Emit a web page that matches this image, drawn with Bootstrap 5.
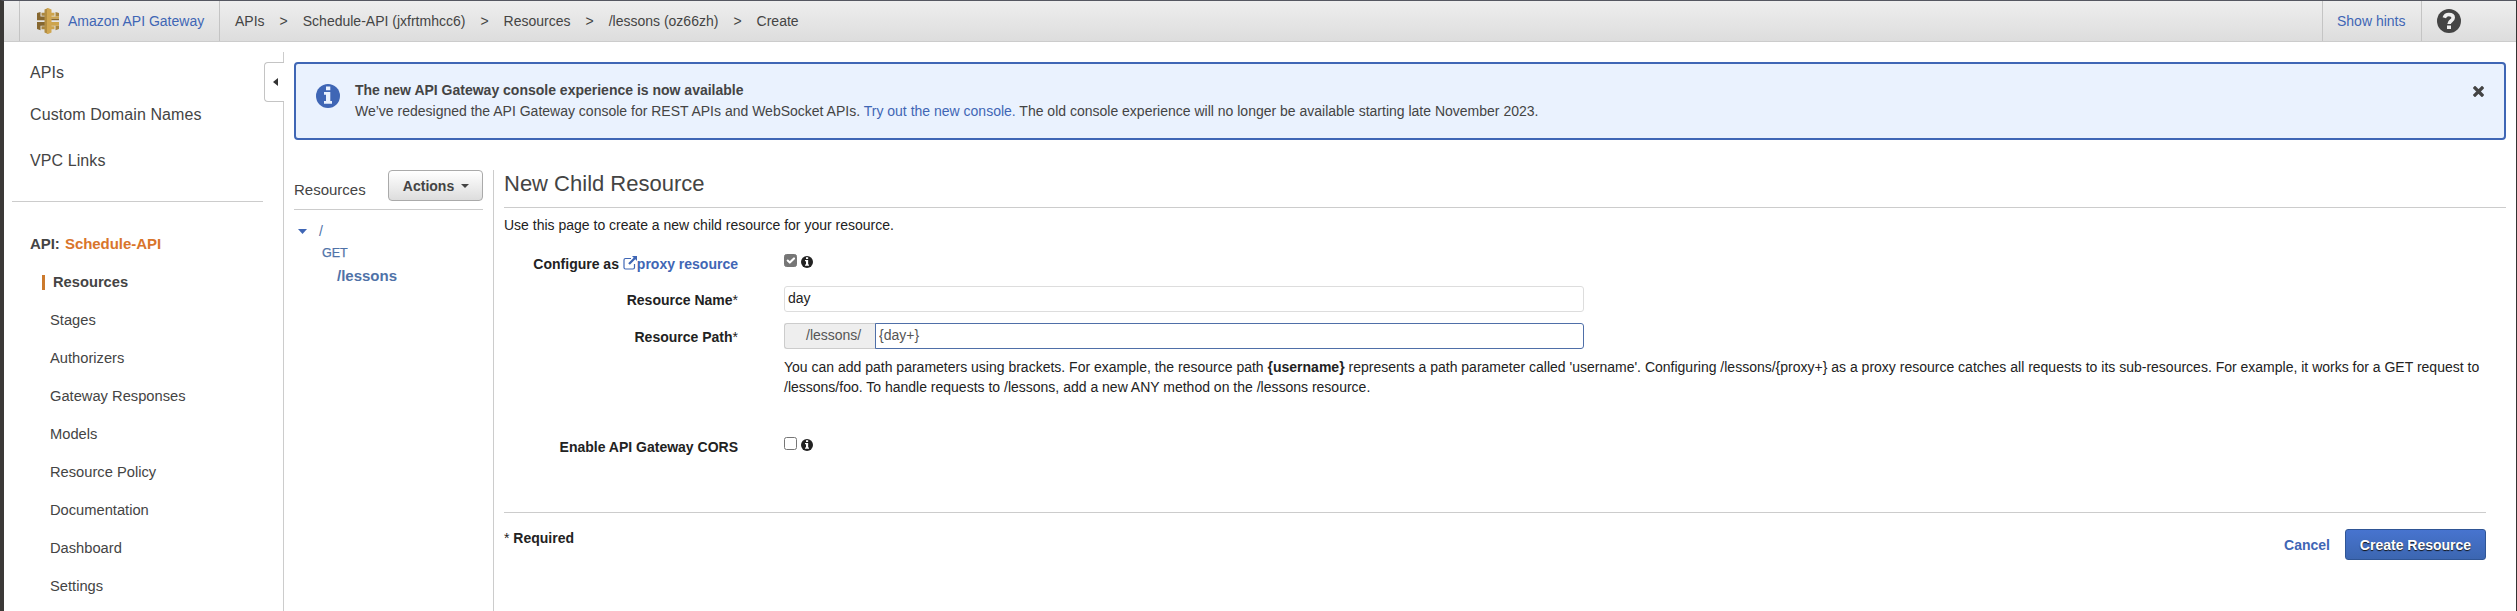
<!DOCTYPE html>
<html lang="en">
<head>
<meta charset="utf-8">
<title>API Gateway</title>
<link href="https://cdn.jsdelivr.net/npm/bootstrap@5.3.0/dist/css/bootstrap.min.css" rel="stylesheet">
<style>
body{font-family:"Liberation Sans",Arial,sans-serif;font-size:14px;line-height:20px;color:#222;background:#fff}
a{color:#3f66b5;text-decoration:none}
.shell{height:611px;border-left:4px solid #3b3937;border-right:1px solid #333;border-top:1px solid #555761;overflow:hidden}
.topbar{height:41px;background:linear-gradient(#eee,#ddd);border-bottom:1px solid #ccc;color:#444}
.svc{width:201px;margin-left:15px;border:solid #c4c4c4;border-width:0 1px;padding-left:17px;gap:9px}
.crumbs{padding-left:15px;gap:15px}
.hints{width:100px;border:solid #c4c4c4;border-width:0 1px;padding-left:14px}
.help{width:94px;padding-left:15px}
.sidebar{width:279px;flex:none;color:#444}
.sidebar .inner{width:251px;margin-left:8px}
.big a{display:block;color:#444;font-size:16px;line-height:20px;margin-left:18px;letter-spacing:.09px}
.big a:nth-child(1){padding-top:21px}
.big a:nth-child(2){padding-top:22px}
.big a:nth-child(3){padding-top:26px}
.side-line{border-top:1px solid #ccc;margin-top:30px}
.apiname{font-size:15px;font-weight:700;margin:32px 0 9px 18px;letter-spacing:-.05px}
.apiname span{color:#d9752b;margin-left:1px}
.menu a{display:block;color:#444;font-size:14.7px;line-height:38px;height:38px;padding-left:38px}
.menu a.current{font-weight:700;padding-left:30px}
.current i{display:inline-block;width:3px;height:15px;background:#cc7a2d;margin-right:8px;vertical-align:-3px}
.divider{width:20px;margin-left:-19px;flex:none;padding-top:10px}
.divider .seg{border-right:1px solid #ccc}
.divider .seg-top{height:10px}
.tab{height:40px;border:1px solid #c4c4c4;border-right:0;border-radius:4px 0 0 4px;background:#fff}
.pane{padding:20px 10px 0}
.notice{height:78px;border:2px solid #3f66b5;border-radius:4px;background:#eaf2fe;color:#444;padding:19px 20px 0 20px;line-height:21px;margin:0}
.notice-text{padding-left:15px;margin-top:-3px}
.split{margin-top:30px}
.tree{width:200px;flex:none;border-right:1px solid #ccc;height:442px}
.tree-head{width:189px;height:40px;border-bottom:1px solid #ccc;font-size:15px;color:#444}
.btn-act{width:95px;height:31px;border:1px solid #aaa;border-radius:4px;background:linear-gradient(#fff,#ddd);font-size:14px;font-weight:700;color:#444;padding:0 0 0 1px;line-height:20px;gap:7px}
.tree-body{color:#4f72a8}
.node-root{padding:11px 0 0 4px;gap:12px}
.node-get{font-size:12.5px;padding:2px 0 0 28px;-webkit-text-stroke:.25px}
.node-child{font-size:15px;padding:3px 0 0 43px}
.content{padding-left:10px}
.content h1{font-size:22px;line-height:28px;color:#444;font-weight:400;margin:0;height:38px;border-bottom:1px solid #ccc}
.intro{padding-top:7px}
.formpart{width:1982px}
.lbl{width:234px;text-align:right;font-weight:700;flex:none;margin-right:46px}
.r-proxy{height:51px;padding-top:19px}
.r-name{height:37px}
.r-path{height:34px}
.r-name .lbl,.r-path .lbl{padding-top:4px}
.lbl span,.req span{font-weight:400}
.hint-text{padding-left:280px;height:80px}
.r-cors{height:75px}
.field{width:800px;height:26px;border-radius:3px;font-size:14px;padding:0 3px 2px;border:1px solid #ddd;line-height:20px;color:#222;min-height:0}
.pathfield{width:800px}
.pathfield .input-group-text{width:92px;height:26px;background:#eee;border:1px solid #ccc;border-right:0;border-radius:3px 0 0 3px;font-size:14px;color:#555;padding:0 0 2px 21px}
.pathfield .form-control{border-color:#4f6fa8;color:#555}
.checks{gap:4px}
.checks .form-check-input{width:13px;height:13px;margin:0;border:1px solid #767676;border-radius:2.5px}
.checks .form-check-input:checked{background-color:#767676;background-size:14px}
.checks svg{--hole:#fff;margin-top:2px}
.foot{border-top:1px solid #ccc}
.req{padding-top:15px}
.acts{gap:15px;padding-top:16px}
.btn-create{width:141px;height:31px;border:1px solid #2f5595;border-radius:3px;background:linear-gradient(#4774cf,#3c66b1);color:#fff;font-size:14px;font-weight:700;padding:0;text-shadow:0 1px 1px #111;line-height:20px}
svg{display:block;flex:none}
</style>
</head>
<body>
<svg width="0" height="0" class="position-absolute"><defs>
<symbol id="info" viewBox="0 0 24 24"><circle cx="12" cy="12" r="12"/><path fill="var(--hole)" d="M10 2.500h4.300v3.700H10zM8 8h6.300v9H16v2.700H8V17h2v-6.300H8z"/></symbol>
</defs></svg>
<div class="shell">
<header class="topbar d-flex">
  <div class="svc d-flex align-items-center">
    <svg width="22" height="26" viewBox="0 0 22 26"><path fill="#86672f" d="M0 5l3.500-1v4.500H8v3.700H0zM0 14h8v3.700H3.500v4.500L0 21z"/><path fill="#a8853f" d="M4.500 4.800H8v3H4.500zM4.500 18.300H8v3H4.500zM18.500 4L22 5v3.500h-3.500zM18.500 17.700H22V21l-3.500 1.200z"/><path fill="#cda44c" d="M14 4.800h3.500v3H14zM14 8.500h8v2.300h-8zM14 14h8v3.700h-8zM14 18.300h3.500v3H14z"/><path fill="#86672f" d="M14 10.800h8v1.400h-8z"/><path fill="#b28d42" d="M7.500 1.500L11 0v26l-3.500-1.500z"/><path fill="#d0a650" d="M10 .4l1-.4 3.500 1.500v23L11 26l-1-.4z"/></svg>
    <a href="#">Amazon API Gateway</a>
  </div>
  <nav class="crumbs d-flex align-items-center flex-grow-1"><span>APIs</span><span>&gt;</span><span>Schedule-API (jxfrtmhcc6)</span><span>&gt;</span><span>Resources</span><span>&gt;</span><span>/lessons (oz66zh)</span><span>&gt;</span><span>Create</span></nav>
  <div class="hints d-flex align-items-center"><a href="#">Show hints</a></div>
  <div class="help d-flex align-items-center"><svg width="24" height="24" viewBox="0 0 24 24"><circle cx="12" cy="12" r="12" fill="#444"/><path fill="none" stroke="#eee" stroke-width="3.600" d="M7.300 8.700C8 6.500 9.600 5.500 11.800 5.500c2.600 0 4.400 1.300 4.400 3.300 0 3-4.100 2.900-4.100 6.200"/><path fill="#eee" d="M10 16.500h4V20h-4z"/></svg></div>
</header>
<div class="d-flex">
  <aside class="sidebar">
    <div class="inner">
      <div class="big"><a href="#">APIs</a><a href="#">Custom Domain Names</a><a href="#">VPC Links</a></div>
      <div class="side-line"></div>
      <div class="apiname">API: <span>Schedule-API</span></div>
      <nav class="menu"><a class="current" href="#"><i></i>Resources</a><a href="#">Stages</a><a href="#">Authorizers</a><a href="#">Gateway Responses</a><a href="#">Models</a><a href="#">Resource Policy</a><a href="#">Documentation</a><a href="#">Dashboard</a><a href="#">Settings</a></nav>
    </div>
  </aside>
  <div class="divider d-flex flex-column">
    <div class="seg seg-top"></div>
    <div class="tab d-flex align-items-center ps-2"><svg width="5" height="8" viewBox="0 0 5 8"><path d="M5 0v8L0 4z" fill="#333"/></svg></div>
    <div class="seg flex-grow-1"></div>
  </div>
  <main class="pane flex-grow-1">
    <div class="notice alert d-flex align-items-start">
      <svg width="24" height="24" style="--hole:#eaf2fe;margin-top:1px" fill="#3f66b5"><use href="#info"/></svg>
      <div class="notice-text flex-grow-1"><b>The new API Gateway console experience is now available</b><br>We’ve redesigned the API Gateway console for REST APIs and WebSocket APIs. <a href="#">Try out the new console.</a> The old console experience will no longer be available starting late November 2023.</div>
      <svg width="11" height="11" viewBox="0 0 11 11" style="margin-top:3px"><path d="M2 2l7 7M9 2l-7 7" stroke="#444" stroke-width="3.300" stroke-linecap="square" fill="none"/></svg>
    </div>
    <div class="split d-flex">
      <section class="tree">
        <div class="tree-head d-flex justify-content-between align-items-start"><span style="padding-top:10px">Resources</span>
          <button class="btn btn-act d-flex align-items-center justify-content-center" type="button">Actions<svg width="8" height="4" viewBox="0 0 8 4" style="margin-top:1px"><path d="M0 0h8L4 4z" fill="#444"/></svg></button></div>
        <div class="tree-body">
          <div class="node-root d-flex align-items-center"><svg width="9" height="5" viewBox="0 0 9 5"><path d="M0 0h9L4.500 5z" fill="#3f66b5"/></svg><span>/</span></div>
          <div class="node-get">GET</div>
          <div class="node-child fw-bold">/lessons</div>
        </div>
      </section>
      <section class="content flex-grow-1">
        <h1>New Child Resource</h1>
        <p class="intro mb-0">Use this page to create a new child resource for your resource.</p>
        <form class="formpart">
          <div class="r-proxy d-flex">
            <label class="lbl">Configure as <a href="#"><svg class="d-inline-block" width="14" height="14" viewBox="0 0 14 14" style="vertical-align:-1px"><path d="M8 2.500H2.500a1.500 1.500 0 0 0-1.500 1.500V11.500A1.500 1.500 0 0 0 2.500 13H10a1.500 1.500 0 0 0 1.500-1.500V8" fill="none" stroke="currentColor" stroke-width="1.200"/><path d="M9 0h5v5l-1.700-1.700L6.800 8.800 5.200 7.200l5.500-5.500z" fill="currentColor"/></svg>proxy resource</a></label>
            <div class="checks d-flex align-items-start"><input class="form-check-input" type="checkbox" checked><svg width="12" height="12" fill="#222"><use href="#info"/></svg></div>
          </div>
          <div class="r-name d-flex"><label class="lbl">Resource Name<span>*</span></label><input class="form-control field" value="day"></div>
          <div class="r-path d-flex"><label class="lbl">Resource Path<span>*</span></label>
            <div class="input-group pathfield flex-nowrap"><span class="input-group-text">/lessons/</span><input class="form-control field" value="{day+}"></div></div>
          <div class="hint-text">You can add path parameters using brackets. For example, the resource path <b>{username}</b> represents a path parameter called 'username'. Configuring /lessons/{proxy+} as a proxy resource catches all requests to its sub-resources. For example, it works for a GET request to /lessons/foo. To handle requests to /lessons, add a new ANY method on the /lessons resource.</div>
          <div class="r-cors d-flex"><label class="lbl">Enable API Gateway CORS</label>
            <div class="checks d-flex align-items-start"><input class="form-check-input" type="checkbox"><svg width="12" height="12" fill="#222"><use href="#info"/></svg></div></div>
          <div class="foot d-flex justify-content-between">
            <div class="req fw-bold"><span>*</span> Required</div>
            <div class="acts d-flex align-items-center fw-bold"><a href="#">Cancel</a><button type="button" class="btn btn-create">Create Resource</button></div>
          </div>
        </form>
      </section>
    </div>
  </main>
</div>
</div>
<script src="https://cdn.jsdelivr.net/npm/bootstrap@5.3.0/dist/js/bootstrap.bundle.min.js"></script>
</body>
</html>
